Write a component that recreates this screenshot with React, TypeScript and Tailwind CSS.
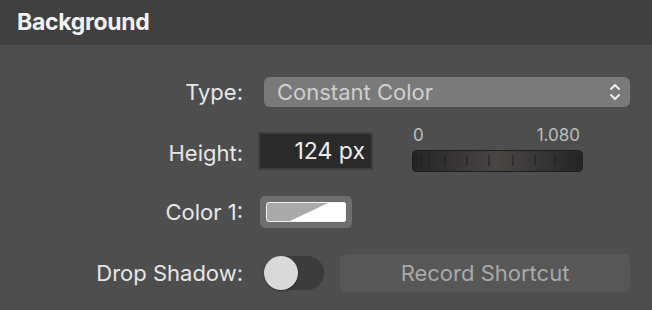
import React from "react";

const font = { fontFamily: "Inter, 'Noto Sans', sans-serif" };

function Ticks() {
  const xs = [5, 9, 17, 33, 55, 77, 101, 123, 143, 158, 166];
  return (
    <svg width="171" height="22" viewBox="0 0 171 22" className="absolute inset-0">
      <defs>
        <linearGradient id="wheel" x1="0" x2="1" y1="0" y2="0">
          <stop offset="0" stopColor="#252525" />
          <stop offset="0.5" stopColor="#4a4545" />
          <stop offset="1" stopColor="#252525" />
        </linearGradient>
      </defs>
      <rect x="0.5" y="0.5" width="170" height="21" rx="4" fill="url(#wheel)" stroke="#1e1e1e" />
      {xs.map((x) => (
        <line key={x} x1={x} x2={x} y1="5" y2="16" stroke="#222" strokeWidth="1.2" />
      ))}
    </svg>
  );
}

export default function App() {
  return (
    <div className="w-[652px] h-[310px] bg-[#4e4e4e] text-[#e6e6e6]" style={font}>
      <div className="h-[45px] bg-[#404040] flex items-center pl-[17px]">
        <span className="text-[23px] font-bold text-[#f2f2f2] tracking-[-0.3px]">Background</span>
      </div>

      <div className="flex flex-col pt-[32px]">
        <div className="flex items-center h-[30px]">
          <div className="w-[243px] text-right text-[22px]">Type:</div>
          <div className="ml-[21px] w-[366px] h-[30px] rounded-[6px] bg-[#7a7a7a] flex items-center pl-[13px] pr-[9px] justify-between">
            <span className="text-[22px] text-[#cfcfcf]">Constant Color</span>
            <svg width="12" height="20" viewBox="0 0 12 20" fill="none" stroke="#eeeeee" strokeWidth="2" strokeLinecap="round" strokeLinejoin="round">
              <path d="M2 7 L6 3 L10 7" />
              <path d="M2 13 L6 17 L10 13" />
            </svg>
          </div>
        </div>

        <div className="flex items-start mt-[20px] h-[45px]">
          <div className="w-[243px] text-right text-[22px] pt-[10px]">Height:</div>
          <div className="ml-[15px] mt-[5px] w-[115px] h-[38px] bg-[#2a2a2a] border-2 border-[#3e3e3e] flex items-center justify-end pr-[6px]">
            <span className="text-[23px] text-[#ededed]">124 px</span>
          </div>
          <div className="ml-[39px] w-[171px] flex flex-col">
            <div className="flex justify-between text-[17px] text-[#bdbdbd] leading-[17px] pl-[1px] pr-[3px]">
              <span>0</span>
              <span>1.080</span>
            </div>
            <div className="relative w-[171px] h-[22px] mt-[6px]">
              <Ticks />
            </div>
          </div>
        </div>

        <div className="flex items-center mt-[24px] h-[32px]">
          <div className="w-[243px] text-right text-[22px]">Color 1:</div>
          <div className="ml-[17px] w-[92px] h-[32px] rounded-[5px] bg-[#6e6e6e] flex items-center justify-center">
            <svg width="80" height="20" viewBox="0 0 80 20">
              <defs>
                <clipPath id="sw">
                  <rect x="0" y="0" width="80" height="20" rx="3" />
                </clipPath>
              </defs>
              <g clipPath="url(#sw)">
                <rect x="0" y="0" width="80" height="20" fill="#a9a9a9" />
                <polygon points="22,20 64,0 80,0 80,20" fill="#ffffff" />
              </g>
              <rect x="0.5" y="0.5" width="79" height="19" rx="3" fill="none" stroke="#f2f2f2" />
            </svg>
          </div>
        </div>

        <div className="flex items-center mt-[26px] h-[38px]">
          <div className="w-[243px] text-right text-[22px]">Drop Shadow:</div>
          <div className="ml-[21px] relative w-[60px] h-[34px]">
            <div className="absolute left-[2px] top-0 w-[58px] h-[34px] rounded-full bg-[#3b3b3b]" />
            <div className="absolute left-0 top-0 w-[34px] h-[34px] rounded-full bg-[#d9d9d9] shadow-[0_1px_2px_rgba(0,0,0,0.4)]" />
          </div>
          <div className="ml-[16px] w-[290px] h-[38px] rounded-[6px] bg-[#575757] flex items-center justify-center">
            <span className="text-[22px] text-[#a9a9a9]">Record Shortcut</span>
          </div>
        </div>
      </div>
    </div>
  );
}
